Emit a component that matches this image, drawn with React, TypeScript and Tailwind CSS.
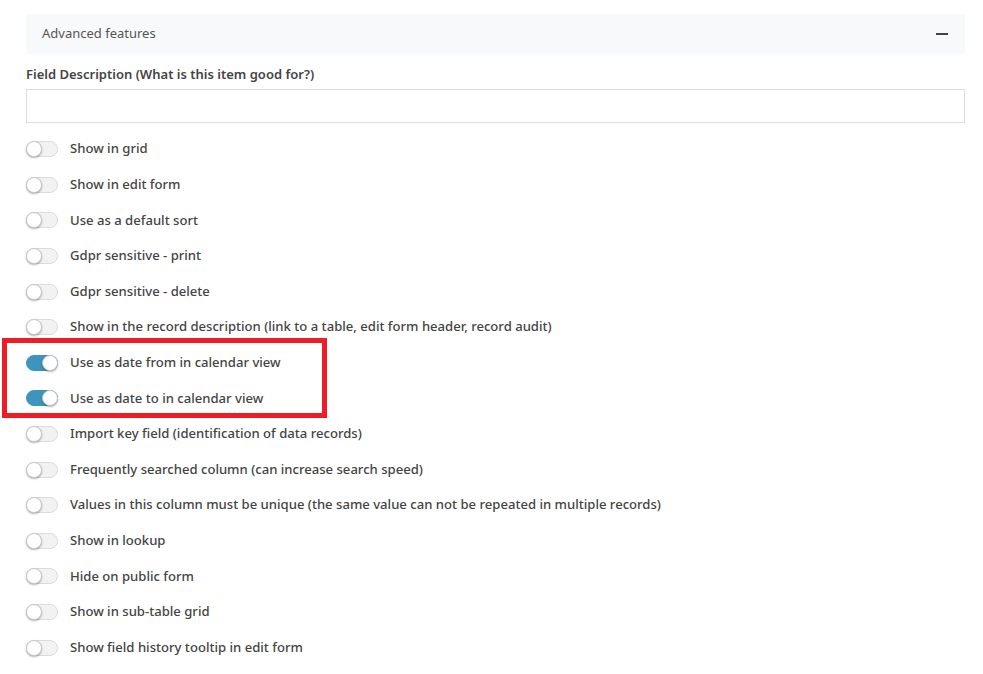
import React from "react";

type Item = { label: string; on?: boolean };

const items: Item[] = [
  { label: "Show in grid" },
  { label: "Show in edit form" },
  { label: "Use as a default sort" },
  { label: "Gdpr sensitive - print" },
  { label: "Gdpr sensitive - delete" },
  { label: "Show in the record description (link to a table, edit form header, record audit)" },
  { label: "Use as date from in calendar view", on: true },
  { label: "Use as date to in calendar view", on: true },
  { label: "Import key field (identification of data records)" },
  { label: "Frequently searched column (can increase search speed)" },
  { label: "Values in this column must be unique (the same value can not be repeated in multiple records)" },
  { label: "Show in lookup" },
  { label: "Hide on public form" },
  { label: "Show in sub-table grid" },
  { label: "Show field history tooltip in edit form" },
];

const Toggle = ({ on }: { on?: boolean }) => (
  <span
    className={`relative inline-block h-[16px] w-[32px] shrink-0 rounded-full border ${
      on ? "border-[#3d95bf] bg-[#3d95bf]" : "border-[#dcdcdc] bg-[#f2f2f2]"
    }`}
  >
    <span
      className={`absolute top-[-1px] h-[16px] w-[16px] rounded-full border border-[#c9c9c9] bg-white shadow-[0_1px_2px_rgba(0,0,0,0.3)] ${
        on ? "right-[-1px]" : "left-[-1px]"
      }`}
    />
  </span>
);

const Row = ({ item }: { item: Item }) => (
  <div className="flex h-[35.6px] items-center gap-3 pl-[26px]">
    <Toggle on={item.on} />
    <span className="text-[13.1px] font-medium text-[#444]">{item.label}</span>
  </div>
);

export default function App() {
  return (
    <div className="min-h-screen bg-white pt-[14px] font-['Noto_Sans',sans-serif]">
      <div className="mx-[26px] mr-[18px] flex h-[40px] items-center justify-between bg-[#f8f9fa] pl-4 pr-[17px]">
        <span className="text-[13px] text-[#555]">Advanced features</span>
        <span className="h-[2px] w-[12px] bg-[#444]" />
      </div>
      <div className="ml-[26px] mr-[18px] mt-[11px]">
        <label className="block text-[13px] font-semibold text-[#444]">
          Field Description (What is this item good for?)
        </label>
        <input className="mt-[4px] block h-[34px] w-full border border-[#ddd] bg-white outline-none" />
      </div>
      <div className="mt-[9px]">
        {items.slice(0, 6).map((it) => (
          <Row key={it.label} item={it} />
        ))}
        <div className="relative">
          <div className="pointer-events-none absolute left-[2px] top-[-7px] h-[80px] w-[325px] border-[5px] border-[#ee1c25]" />
          {items.slice(6, 8).map((it) => (
            <Row key={it.label} item={it} />
          ))}
        </div>
        {items.slice(8).map((it) => (
          <Row key={it.label} item={it} />
        ))}
      </div>
    </div>
  );
}
